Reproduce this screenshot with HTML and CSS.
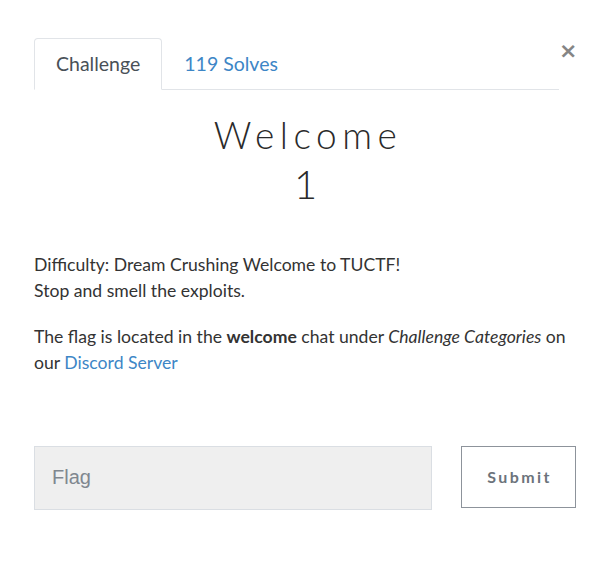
FILE: index.html
```html
<!DOCTYPE html>
<html lang="en">
<head>
<meta charset="utf-8">
<title>Challenge</title>
<link rel="stylesheet" href="styles.css">
</head>
<body>
<div class="modal">
  <div class="head">
    <ul class="tabs">
      <li class="tab active">Challenge</li>
      <li class="tab"><a href="#solves">119 Solves</a></li>
    </ul>
    <button class="close" aria-label="Close">&times;</button>
  </div>
  <h2 class="name">Welcome</h2>
  <h3 class="value">1</h3>
  <div class="desc">
    <p>Difficulty: Dream Crushing Welcome to TUCTF!<br>Stop and smell the exploits.</p>
    <p>The flag is located in the <strong>welcome</strong> chat under <em>Challenge Categories</em> on our <a href="#discord">Discord Server</a></p>
  </div>
  <form class="submit-row">
    <input class="flag" type="text" placeholder="Flag">
    <button class="submit" type="button">Submit</button>
  </form>
</div>
</body>
</html>
```
FILE: styles.css
```css
html, body {
  margin: 0;
  padding: 0;
  background: #fff;
}
body {
  font-family: Lato, "Open Sans", sans-serif;
  font-size: 17.6px;
  color: #212529;
}
.modal {
  padding: 38px 35px 0 34px;
}
.head {
  display: flex;
  align-items: flex-start;
}
.tabs {
  flex: 1;
  display: flex;
  list-style: none;
  margin: 0;
  padding: 0;
  border-bottom: 1px solid #e1e4e8;
}
.tab {
  height: 50px;
  line-height: 50px;
  padding: 0 21px;
  margin-bottom: -1px;
  border: 1px solid transparent;
  border-radius: 4px 4px 0 0;
  font-size: 19.5px;
  color: #495057;
}
.tab.active {
  border-color: #e1e4e8 #e1e4e8 #fff;
  background: #fff;
}
.tab a {
  color: #3d86c6;
  text-decoration: none;
}
.close {
  width: 18px;
  margin: 4px 0 0 0;
  padding: 0;
  border: 0;
  background: none;
  font-family: "DejaVu Sans", sans-serif;
  font-size: 22px;
  font-weight: bold;
  line-height: 18px;
  color: #858585;
}
.name {
  margin: 23px 0 0;
  padding-left: 5px;
  text-align: center;
  font-family: Lato, sans-serif;
  font-weight: 300;
  font-size: 37px;
  line-height: 43px;
  letter-spacing: 5.5px;
  color: #2a2a2a;
}
.value {
  margin: 6px 0 0;
  text-align: center;
  font-family: Lato, sans-serif;
  font-weight: 300;
  font-size: 40px;
  line-height: 44px;
  color: #2a2a2a;
}
.desc {
  margin-top: 46px;
  font-size: 17.6px;
  line-height: 26.4px;
  color: #333;
}
.desc p {
  margin: 0 0 19px;
}
.desc p:last-child {
  margin-bottom: 0;
}
.desc a {
  color: #3d86c6;
  text-decoration: none;
}
.submit-row {
  display: flex;
  align-items: flex-start;
  margin-top: 69px;
  gap: 29px;
}
.flag {
  box-sizing: border-box;
  width: 398px;
  height: 64px;
  margin: 0;
  padding: 0 17px;
  border: 1px solid #dadee3;
  background: #efefef;
  font-family: "Liberation Sans", Arial, sans-serif;
  font-size: 20px;
  color: #333;
}
.flag::placeholder {
  color: #80878f;
}
.submit {
  box-sizing: border-box;
  width: 115px;
  height: 62px;
  margin: 0;
  padding: 0 0 0 2px;
  border: 1px solid #8d939b;
  background: #fff;
  font-family: Lato, sans-serif;
  font-weight: bold;
  font-size: 16px;
  letter-spacing: 2.4px;
  color: #6c737b;
}
```
